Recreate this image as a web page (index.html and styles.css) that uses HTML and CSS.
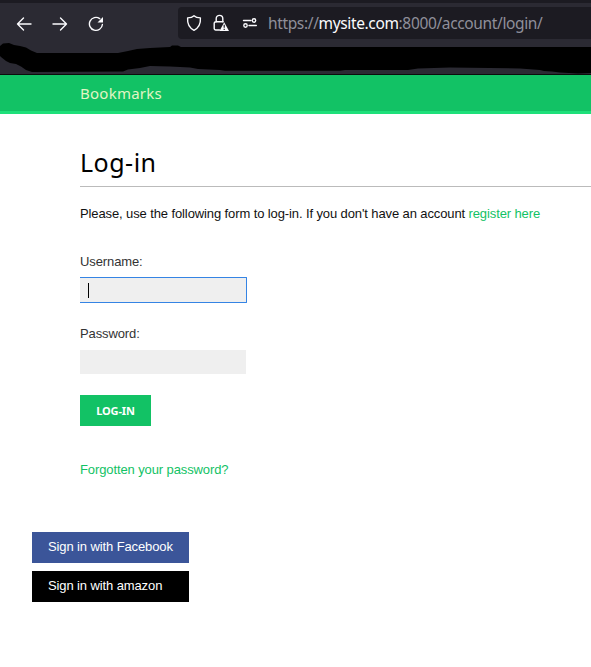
FILE: index.html
```html
<!DOCTYPE html>
<html lang="en">
<head>
<meta charset="utf-8">
<title>Log-in</title>
<link rel="stylesheet" href="styles.css">
</head>
<body>
<div class="browser">
  <div class="toolbar">
    <div class="nav">
      <svg width="16" height="16" viewBox="0 0 16 16"><path d="M15 8H1.500M7.500 2L1.500 8l6 6"/></svg>
      <svg width="16" height="16" viewBox="0 0 16 16"><path d="M1 8h13.500M8.500 2l6 6-6 6"/></svg>
      <svg width="16" height="16" viewBox="0 0 16 16"><path d="M11.700 2.600A6.500 6.500 0 1 0 14.400 8.500"/><path class="solid" d="M15 1v5.500H9.500z"/></svg>
    </div>
    <div class="address">
      <svg class="shield" width="16" height="18" viewBox="0 0 16 18"><path d="M8 1.700C6.500 3.200 4.500 3.800 1.600 3.900C1.200 9.500 2.500 13.500 8 16.300C13.500 13.500 14.800 9.500 14.400 3.900C11.500 3.800 9.500 3.200 8 1.700z"/></svg>
      <svg class="lock" width="16" height="18" viewBox="0 0 16 18"><path d="M3.200 8V4.700a3.300 3.300 0 0 1 6.600 0V8M6.500 16H2.700a1.500 1.500 0 0 1-1.500-1.500V9.300a1.500 1.500 0 0 1 1.500-1.500h7.600"/><path class="solid" d="M11.200 8.300L16 17H6.500z"/><path class="mark" d="M11.200 10.800v3M11.200 14.800v1.200"/></svg>
      <svg class="perms" width="16" height="12" viewBox="0 0 16 12"><path d="M1.500 3.500h7.500M7 8.500h7.300"/><circle cx="12" cy="3.500" r="1.700"/><circle cx="3.500" cy="8.500" r="1.700"/></svg>
      <span class="url">https://<b>mysite.com</b>:8000/account/login/</span>
    </div>
  </div>
  <svg class="bookmarks-bar" width="591" height="34" viewBox="0 40 591 34"><path d="M0 46L3 43.500 9 43 14 45 20 46 26 47.500 31 50.500 37 53H118L128 51 137 49 150 48 170 47 172 45.500H178L181 47H591V73L578 73.500 560 72.500 552 71.500 544 71 540 70 520 68.500 450 67.500 418 68.500 408 70H345L340 70.800H225L220 70 198 69 190 67.500 170 66.500 150 66 140 68 128 69.500 123 71.500 32 72 26 70 21 66.500 16 64 10 63 6 61 1 57 0 56z"/></svg>
</div>
<header class="header"><span class="logo">Bookmarks</span></header>
<main class="content">
  <h1><span>Log-in</span></h1>
  <p class="intro">Please, use the following form to log-in. If you don't have an account <a href="#">register here</a></p>
  <form class="login">
    <label for="user">Username:</label>
    <div class="field focused" id="user"><i class="caret"></i></div>
    <label for="pass">Password:</label>
    <div class="field" id="pass"></div>
    <button type="button">LOG-IN</button>
  </form>
  <p class="forgot"><a href="#">Forgotten your password?</a></p>
</main>
<ul class="social">
  <li class="facebook">Sign in with Facebook</li>
  <li class="amazon">Sign in with amazon</li>
</ul>
</body>
</html>
```
FILE: styles.css
```css
* { box-sizing: border-box; }
body {
  margin: 0;
  height: 667px;
  overflow: hidden;
  background: #fff;
  color: #111;
  font: 13px/16px "Liberation Sans", sans-serif;
  letter-spacing: -0.11px;
}
a { color: #12c265; text-decoration: none; }

.browser {
  height: 75px;
  background: #2b2a33;
  border-top: 3px solid #1c1b22;
  border-bottom: 1px solid #0c0c0d;
}
.toolbar { display: flex; height: 37px; padding-top: 4px; }
.nav { display: flex; gap: 20px; width: 178px; padding: 9px 0 0 16px; }
.toolbar svg { flex: none; fill: none; stroke: #fbfbfe; stroke-width: 1.4; stroke-linecap: round; stroke-linejoin: round; }
.toolbar .solid { fill: #fbfbfe; stroke: none; }
.toolbar .mark { stroke: #1c1b22; stroke-width: 1.2; stroke-linecap: butt; }
.address {
  display: flex;
  align-items: center;
  flex: 1;
  height: 32px;
  padding-left: 8px;
  background: #1c1b22;
  border-radius: 4px 0 0 4px;
}
.lock { margin-left: 11px; }
.perms { margin-left: 13px; }
.url { margin-left: 10px; color: #8f8f9a; font: 15.5px/24px "Noto Sans", sans-serif; letter-spacing: -0.36px; white-space: nowrap; }
.url b { color: #fbfbfe; font-weight: 400; }
.bookmarks-bar { display: block; fill: #000; }

.header {
  height: 39px;
  padding: 6px 0 0 80px;
  background: #12c265;
  border-bottom: 3px solid #1ee07a;
}
.logo { color: #e1f5c4; font: 400 15px/24px "Noto Sans", sans-serif; letter-spacing: 0.25px; }

.content { padding-left: 80px; }
h1 {
  height: 73px;
  margin: 0;
  padding-top: 32px;
  border-bottom: 1px solid #bbb;
  color: #000;
  font: 400 25px/32px "Noto Sans", sans-serif;
  letter-spacing: 0.5px;
}
.intro { margin: 19px 0 0; white-space: nowrap; }
.login { display: flex; flex-direction: column; align-items: flex-start; padding-top: 32px; }
label { color: #333; }
.field { width: 166px; height: 24px; margin: 8px 0 21px; background: #efefef; }
.focused {
  width: 167px;
  height: 26px;
  margin: 7px 0 23px;
  padding: 5px 0 0 8px;
  border: 1px solid #3584e4;
  border-left: 0;
  border-radius: 0 1px 1px 0;
}
.caret { display: block; width: 1px; height: 15px; background: #000; }
button {
  width: 71px;
  height: 31px;
  padding: 0;
  border: 0;
  background: #12c265;
  color: #fff;
  font: 700 11px/31px "Noto Sans", sans-serif;
  letter-spacing: -0.1px;
}
.forgot { margin: 36px 0 0; }

.social { width: 157px; margin: 54px 0 0 32px; padding: 0; list-style: none; }
.social li { height: 31px; margin-bottom: 8px; padding-left: 16px; color: #fff; line-height: 30px; }
.facebook { background: #3b5599; }
.amazon { background: #000; }
```
